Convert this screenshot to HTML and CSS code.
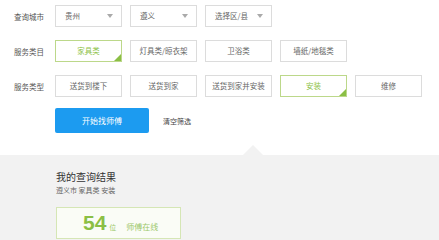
FILE: index.html
```html
<!DOCTYPE html>
<html lang="zh-CN">
<head>
  <meta charset="UTF-8">
  <meta name="viewport" content="width=device-width, initial-scale=1.0">
  <title>查询师傅</title>
  <link rel="stylesheet" href="styles.css">
</head>
<body>
  <div class="filter">
    <div class="row">
      <div class="label">查询城市</div>
      <div class="select">贵州<span class="arrow"></span></div>
      <div class="select">遵义<span class="arrow"></span></div>
      <div class="select">选择区/县<span class="arrow"></span></div>
    </div>

    <div class="row">
      <div class="label">服务类目</div>
      <div class="opt active">家具类</div>
      <div class="opt">灯具类/晾衣架</div>
      <div class="opt">卫浴类</div>
      <div class="opt">墙纸/地毯类</div>
    </div>

    <div class="row">
      <div class="label">服务类型</div>
      <div class="opt">送货到楼下</div>
      <div class="opt">送货到家</div>
      <div class="opt">送货到家并安装</div>
      <div class="opt active">安装</div>
      <div class="opt">维修</div>
    </div>

    <div class="actions">
      <button class="search">开始找师傅</button>
      <span class="clear">清空筛选</span>
    </div>
  </div>

  <div class="result">
    <div class="result-title">我的查询结果</div>
    <div class="result-sub">遵义市 家具类 安装</div>
    <div class="count">
      <span class="num">54</span>
      <span class="unit">位</span>
      <span class="online">师傅在线</span>
    </div>
  </div>
</body>
</html>
```

FILE: styles.css
```css
body {
  margin: 0;
  background-color: #fff;
  font-family: "Noto Sans CJK SC", "Noto Sans", sans-serif;
  color: #555;
}
.filter {
  padding: 5px 0 0 14px;
  height: 145px;
}
.row {
  display: flex;
  align-items: center;
  gap: 8px;
  height: 22px;
  margin-bottom: 13px;
}
.label {
  width: 33px;
  font-size: 7.5px;
  color: #555;
}
.select,
.opt {
  box-sizing: border-box;
  width: 67px;
  height: 22px;
  border: 1px solid #dcdcdc;
  background-color: #fff;
  font-size: 7.5px;
  line-height: 20px;
  color: #666;
}
.select {
  position: relative;
  padding-left: 9px;
}
.arrow {
  position: absolute;
  right: 8px;
  top: 8px;
  border-left: 3px solid transparent;
  border-right: 3px solid transparent;
  border-top: 4px solid #aaa;
}
.opt {
  position: relative;
  text-align: center;
}
.opt.active {
  border-color: #bcd88a;
  color: #8bbf45;
}
.opt.active:after {
  content: "";
  position: absolute;
  right: 0;
  bottom: 0;
  border-left: 7px solid transparent;
  border-bottom: 7px solid #8bbf45;
}
.actions {
  display: flex;
  align-items: center;
  gap: 14px;
  margin: -2px 0 0 41px;
}
.search {
  width: 94px;
  height: 25px;
  border: none;
  border-radius: 2px;
  background-color: #1c9bf0;
  color: #fff;
  font-family: inherit;
  font-size: 8px;
  padding: 0;
}
.clear {
  font-size: 7px;
  color: #444;
}
.result {
  position: relative;
  background-color: #f2f2f2;
  margin-top: 5px;
  padding: 15px 0 0 56px;
  height: 70px;
}
.result:before {
  content: "";
  position: absolute;
  left: 243px;
  top: -10px;
  border-left: 10px solid transparent;
  border-right: 10px solid transparent;
  border-bottom: 10px solid #f2f2f2;
}
.result-title {
  font-size: 10px;
  line-height: 14px;
  color: #333;
}
.result-sub {
  margin-top: 1px;
  font-size: 7px;
  line-height: 10px;
  color: #666;
}
.count {
  box-sizing: border-box;
  display: flex;
  align-items: baseline;
  width: 125px;
  height: 32px;
  margin-top: 12px;
  padding: 4px 0 0 26px;
  border: 1px solid #d5e6b5;
  background-color: #fafcf6;
  color: #8bbf45;
}
.num {
  font-family: "Liberation Sans", Arial, sans-serif;
  font-size: 21px;
  font-weight: bold;
  line-height: 22px;
}
.unit {
  margin-left: 3px;
  font-size: 7px;
  color: #9cc86a;
}
.online {
  margin-left: 10px;
  font-size: 8px;
  color: #9cc86a;
}
```
